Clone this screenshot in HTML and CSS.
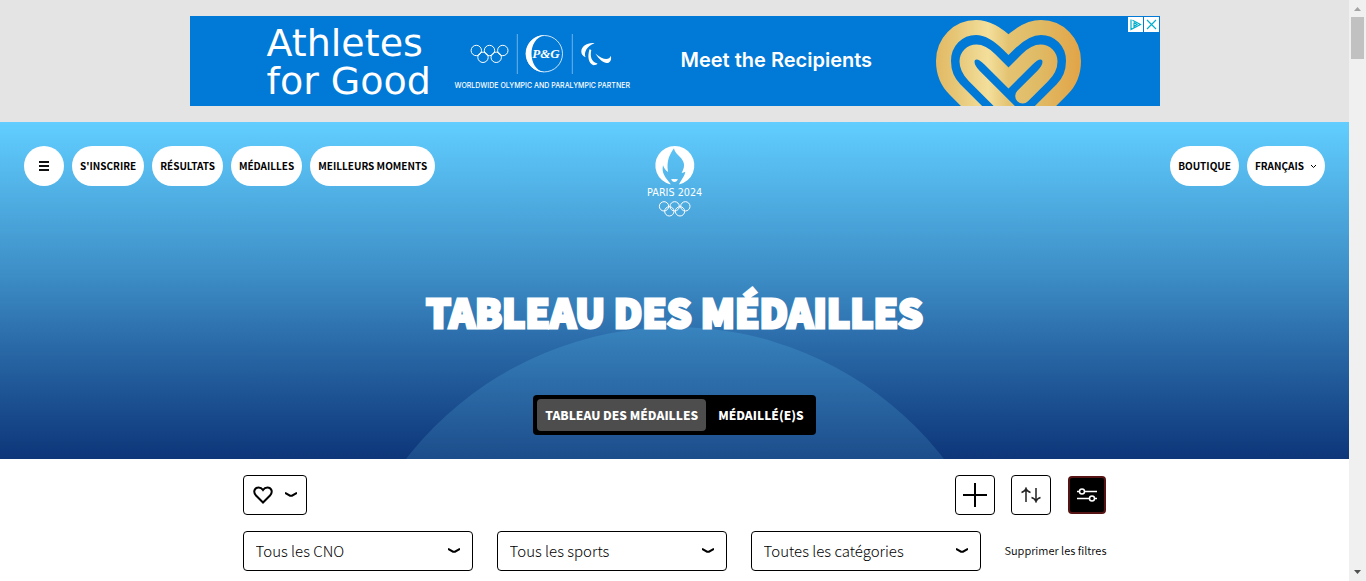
FILE: index.html
```html
<!DOCTYPE html>
<html lang="fr">
<head>
<meta charset="utf-8">
<meta name="viewport" content="width=device-width, initial-scale=1">
<title>Tableau des médailles</title>
<link rel="stylesheet" href="styles.css">
</head>
<body>
<div class="page">
  <aside class="ad-strip">
    <div class="ad">
      <p class="ad-title"><span>Athletes</span> <span>for Good</span></p>
      <div class="ad-partner">
        <svg class="ad-logos" viewBox="470 33 144 42" aria-hidden="true">
          <g fill="none" stroke="#fff" stroke-width="1">
            <circle cx="476.3" cy="50.5" r="5.2"/><circle cx="489.5" cy="50.5" r="5.2"/><circle cx="502.8" cy="50.5" r="5.2"/>
            <circle cx="483" cy="57.3" r="5.2"/><circle cx="496.2" cy="57.3" r="5.2"/>
            <path d="M517.3 34V74M572.3 34V74" stroke="#6db3ea"/>
            <circle cx="544.3" cy="53.7" r="18.2" stroke-width=".8"/>
          </g>
          <g fill="#fff">
            <path d="M544.3 35.2a18.5 18.5 0 0 0 0 37C536 70.500 531.500 62.500 531.500 53.700 531.500 45 536 37 544.300 35.200Z"/>
            <text class="pg" x="546" y="58" text-anchor="middle">P&amp;G</text>
            <path d="M594.500 43.200C587 42.400 581.300 46.500 581.300 51.500 581.300 54.500 583 56.200 585.500 57.200 583.800 52 586.500 46.500 594.500 43.200Z"/>
            <path d="M589.500 49.200C587.300 57 588.300 63 593.500 65.200 595.500 65.200 597 64.500 597.500 63.500 591.500 62 589.800 56.500 591.300 50Z"/>
            <path d="M595.300 53.500C600 60.500 605 64.500 609 62.500 611 61.500 611.600 58.500 610.800 55.800 609 60.500 603.500 60.500 595.300 53.500Z"/>
          </g>
        </svg>
        <span class="ad-caption">WORLDWIDE OLYMPIC AND PARALYMPIC PARTNER</span>
      </div>
      <a class="ad-link" href="#">Meet the Recipients</a>
      <svg class="ad-heart" viewBox="934 16 150 90" aria-hidden="true">
        <defs>
          <linearGradient id="gold" gradientUnits="userSpaceOnUse" x1="936" y1="0" x2="1081" y2="0">
            <stop offset="0" stop-color="#e2b964"/><stop offset=".14" stop-color="#e6c778"/><stop offset=".36" stop-color="#f3df9b"/>
            <stop offset=".5" stop-color="#e3c372"/><stop offset=".7" stop-color="#e0bb66"/><stop offset="1" stop-color="#e2a447"/>
          </linearGradient>
        </defs>
        <g fill="none" stroke="url(#gold)" stroke-width="15" stroke-linecap="round">
          <path d="M981.500 116L955 89.500C947 81.500 943.500 72 943.500 61 943.500 42 958 27.500 976 27.500 989 27.500 999 35 1008.500 44.500 1018 35 1028 27.500 1041 27.500 1059 27.500 1073.500 42 1073.500 61 1073.500 72 1070 81.500 1062 89.500L1035.500 116"/>
          <path d="M1014.300 116L974 75.700C969 70.500 967 67 967 61.500 967 56 971 52 976.500 52 982 52 986 55.500 990 59.500L1008.500 78 1027 59.500C1031 55.500 1035 52 1040.500 52 1046 52 1050 56 1050 61.500 1050 67 1048 70.700 1043 75.700L1022.700 96"/>
        </g>
      </svg>
      <div class="ad-options">
        <button class="ad-option" aria-label="Choix publicitaires"><svg viewBox="0 0 15 15"><path d="M3 2.500V12.500L12.500 7.500 4.500 3.200M6 5.500V10.500M6 5.500L9 7.500 6 9.500"/></svg></button>
        <button class="ad-option" aria-label="Fermer"><svg viewBox="0 0 15 15"><path d="M3 3L12 12M12 3L3 12"/></svg></button>
      </div>
    </div>
  </aside>

  <header class="hero">
    <div class="topbar">
      <nav class="nav">
        <button class="pill pill-menu" aria-label="Menu"><svg viewBox="0 0 10 10"><path d="M0 1H10M0 5H10M0 9H10"/></svg></button>
        <a class="pill" href="#">S'INSCRIRE</a>
        <a class="pill" href="#">RÉSULTATS</a>
        <a class="pill" href="#">MÉDAILLES</a>
        <a class="pill" href="#">MEILLEURS MOMENTS</a>
      </nav>
      <a class="logo" href="#" aria-label="Paris 2024">
        <svg viewBox="39 33 192 216">
          <path fill="#fff" fill-rule="evenodd" d="M122 148.500A58.500 58.500 0 1 1 147 148.500C151 137 164 125 166 110 162 112 159 113 155 114 163 98 165 88 157 75 149 61 135 57 132 40 119 59 109 76 114 111 107 107 103 101 99 91 94 113 106 127 113 136 117 141 120 144 122 148.500Z"/>
          <path fill="#fff" d="M123 132C127 134 129 131 133 133 137 131 139 134 144 132 140 144 127 144 123 132Z"/>
          <text class="logo-text" x="134" y="184" text-anchor="middle">PARIS 2024</text>
          <g fill="none" stroke="#fff" stroke-width="3">
            <circle cx="102" cy="214" r="14"/><circle cx="134" cy="214" r="14"/><circle cx="166" cy="214" r="14"/>
            <circle cx="118" cy="229" r="14"/><circle cx="150" cy="229" r="14"/>
          </g>
        </svg>
      </a>
      <div class="nav nav-end">
        <a class="pill" href="#">BOUTIQUE</a>
        <button class="pill">FRANÇAIS <svg class="pill-chevron" viewBox="0 0 7 7"><path d="M1 2L3.500 4.500 6 2"/></svg></button>
      </div>
    </div>
    <h1 class="title">TABLEAU DES MÉDAILLES</h1>
    <div class="tabs">
      <button class="tab tab-active">TABLEAU DES MÉDAILLES</button>
      <button class="tab">MÉDAILLÉ(E)S</button>
    </div>
  </header>

  <main class="filters">
    <div class="tools">
      <button class="tool tool-fav" aria-label="Favoris">
        <svg class="icon-heart" viewBox="0 0 20 18"><path d="M10 16.500L3 9.500C-.5 5.500 2 1.500 5.500 1.500 7.500 1.500 9 2.500 10 4 11 2.500 12.500 1.500 14.500 1.500 18 1.500 20.500 5.500 17 9.500Z"/></svg>
        <svg class="chevron" viewBox="0 0 12 6"><path d="M0 .8L5 3.700H7L12 .8"/></svg>
      </button>
      <div class="tools-end">
        <button class="tool" aria-label="Ajouter"><svg class="icon-plus" viewBox="0 0 24 24"><path d="M12 0V24M0 12H24"/></svg></button>
        <button class="tool" aria-label="Trier"><svg class="icon-sort" viewBox="0 0 22 16"><path d="M6 15V2M1.500 5.500Q5 4.500 6 1.500 7 4.500 10.500 5.500M16 1V14M11.500 10.500Q15 11.500 16 14.500 17 11.500 20.500 10.500"/></svg></button>
        <button class="tool tool-active" aria-label="Filtres"><svg class="icon-sliders" viewBox="0 0 20 14"><path d="M0 3.500H2.500M7.500 3.500H20M0 10.500H12.500M17.500 10.500H20"/><circle cx="5" cy="3.500" r="2.500"/><circle cx="15" cy="10.500" r="2.500"/></svg></button>
      </div>
    </div>
    <div class="fields">
      <div class="field">
        <select class="select" aria-label="CNO"><option>Tous les CNO</option></select>
        <svg class="chevron" viewBox="0 0 12 6"><path d="M0 .8L5 3.700H7L12 .8"/></svg>
      </div>
      <div class="field">
        <select class="select" aria-label="Sports"><option>Tous les sports</option></select>
        <svg class="chevron" viewBox="0 0 12 6"><path d="M0 .8L5 3.700H7L12 .8"/></svg>
      </div>
      <div class="field">
        <select class="select" aria-label="Catégories"><option>Toutes les catégories</option></select>
        <svg class="chevron" viewBox="0 0 12 6"><path d="M0 .8L5 3.700H7L12 .8"/></svg>
      </div>
      <button class="clear">Supprimer les filtres</button>
    </div>
  </main>
</div>
<div class="scrollbar" aria-hidden="true">
  <svg class="scroll-arrow" viewBox="0 0 17 17"><path fill="#a3a3a3" d="M5 11L8.500 7 12 11Z"/></svg>
  <div class="scroll-thumb"></div>
  <svg class="scroll-arrow scroll-down" viewBox="0 0 17 17"><path fill="#505050" d="M5 6L8.500 10 12 6Z"/></svg>
</div>
</body>
</html>
```

FILE: styles.css
```css
* { box-sizing: border-box; }

body {
  margin: 0;
  height: 100vh;
  display: grid;
  grid-template-columns: 1fr 17px;
  grid-template-rows: 100vh;
  overflow: hidden;
  background: #fff;
  color: #000;
  font-family: "Noto Sans CJK SC", "Noto Sans", sans-serif;
}

button, select { font-family: inherit; color: inherit; cursor: pointer; }
a { color: inherit; text-decoration: none; }
svg { display: block; flex: none; }

.page { min-width: 0; }

/* Advertising strip */
.ad-strip {
  display: flex;
  justify-content: center;
  padding: 16px;
  background: #e4e4e4;
}
.ad {
  position: relative;
  display: flex;
  align-items: center;
  width: 970px;
  height: 90px;
  padding-left: 77px;
  overflow: hidden;
  background: #0079d7;
  color: #fff;
  font-family: Inter, "Open Sans", sans-serif;
}
.ad-title {
  flex: none;
  display: flex;
  flex-direction: column;
  width: 188px;
  margin: 0;
  padding-top: 2px;
  font-family: "DejaVu Sans", sans-serif;
  font-size: 38px;
  line-height: 38px;
  white-space: nowrap;
}
.ad-partner {
  flex: none;
  width: 226px;
  display: flex;
  flex-direction: column;
  gap: 6px;
  padding-top: 1px;
}
.ad-logos { width: 144px; height: 42px; margin-left: 15px; }
.pg { font: italic bold 13px "Liberation Serif", serif; }
.ad-caption { font-size: 7px; line-height: 10px; font-weight: 500; white-space: nowrap; }
.ad-link { flex: none; width: 253px; padding-bottom: 2px; font-size: 20px; font-weight: 600; }
.ad-heart { width: 150px; height: 90px; }
.ad-options { position: absolute; top: 1px; right: 1px; display: flex; gap: 1px; }
.ad-option { width: 15px; height: 15px; padding: 0; border: 0; background: #fff; }
.ad-option svg { width: 15px; height: 15px; fill: none; stroke: #00aecd; stroke-width: 1.2; }

/* Hero */
.hero {
  position: relative;
  isolation: isolate;
  display: flex;
  flex-direction: column;
  align-items: center;
  padding: 24px;
  overflow: hidden;
  background: linear-gradient(#61ceff 0%, #3d8ec7 45%, #2a6aa8 66%, #0d3679 100%);
}
.hero::before {
  content: "";
  position: absolute;
  z-index: -1;
  top: 205px;
  left: 50%;
  width: 680px;
  height: 680px;
  margin-left: -340px;
  border-radius: 50%;
  background: linear-gradient(#3884be 0, #1c4d8b 132px);
}
.topbar {
  align-self: stretch;
  display: grid;
  grid-template-columns: 1fr auto 1fr;
  align-items: start;
}
.nav { display: flex; gap: 8px; }
.nav-end { justify-content: flex-end; }
.pill {
  display: flex;
  align-items: center;
  gap: 6px;
  height: 40px;
  padding: 0 8px;
  border: 0;
  border-radius: 20px;
  background: #fff;
  font-size: 10px;
  line-height: 16px;
  font-weight: 700;
  white-space: nowrap;
}
.pill-menu { width: 40px; justify-content: center; }
.pill-menu svg { width: 10px; height: 10px; stroke: #111; stroke-width: 2; }
.pill-chevron { width: 7px; height: 7px; fill: none; stroke: #000; }
.logo svg { width: 64px; height: 72px; overflow: visible; }
.logo-text { font: 29px "DejaVu Sans", sans-serif; fill: #fff; }
.title {
  margin: 65px 0 56px;
  color: #fff;
  font-size: 39px;
  line-height: 56px;
  font-weight: 900;
  -webkit-text-stroke: 3px #fff;
  white-space: nowrap;
}
.tabs { display: flex; gap: 4px; padding: 4px; border-radius: 4px; background: #000; }
.tab {
  height: 32px;
  padding: 0 8px;
  border: 0;
  border-radius: 4px;
  background: none;
  color: #fff;
  font-size: 12px;
  line-height: 16px;
  font-weight: 900;
  white-space: nowrap;
}
.tab-active { background: #4d4d4d; }

/* Filters */
.filters {
  display: flex;
  flex-direction: column;
  gap: 16px;
  max-width: 864px;
  margin: 0 auto;
  padding: 16px 0;
}
.tools { display: flex; justify-content: space-between; }
.tools-end { display: flex; align-items: center; gap: 16px; }
.tool {
  display: flex;
  align-items: center;
  justify-content: center;
  width: 40px;
  height: 40px;
  padding: 0;
  border: 1px solid #000;
  border-radius: 4px;
  background: #fff;
}
.tool svg { fill: none; stroke: #000; stroke-width: 2; }
.tool-fav { width: 64px; gap: 12px; }
.tool-active { width: 38px; height: 38px; margin: 0 1px; border: 2px solid #551313; background: #000; }
.icon-heart { width: 20px; height: 18px; }
.icon-plus { width: 24px; height: 24px; }
.tool .icon-sort { width: 22px; height: 16px; stroke: #222; stroke-width: 1.5; }
.tool .icon-sliders { width: 20px; height: 14px; stroke: #fff; stroke-width: 1.5; }
.fields {
  display: grid;
  grid-template-columns: 1fr 1fr 1fr auto;
  gap: 24px;
  align-items: center;
}
.field { display: grid; align-items: center; }
.field > * { grid-area: 1 / 1; }
.select {
  appearance: none;
  width: 100%;
  height: 40px;
  padding: 0 40px 2px 12px;
  border: 1px solid #000;
  border-radius: 4px;
  background: #fff;
  font-size: 15px;
  font-weight: 300;
}
.chevron { width: 12px; height: 6px; fill: none; stroke: #000; stroke-width: 2; }
.field .chevron { justify-self: end; margin-right: 13px; pointer-events: none; }
.clear {
  padding: 0 0 2px;
  border: 0;
  background: none;
  font-size: 11px;
  line-height: 16px;
  font-weight: 350;
  white-space: nowrap;
}

/* Window scrollbar */
.scrollbar { display: flex; flex-direction: column; align-items: center; background: #f0f0f0; }
.scroll-arrow { width: 17px; height: 17px; }
.scroll-thumb { width: 13px; height: 42px; background: #c1c1c1; }
.scroll-down { margin-top: auto; }
```
